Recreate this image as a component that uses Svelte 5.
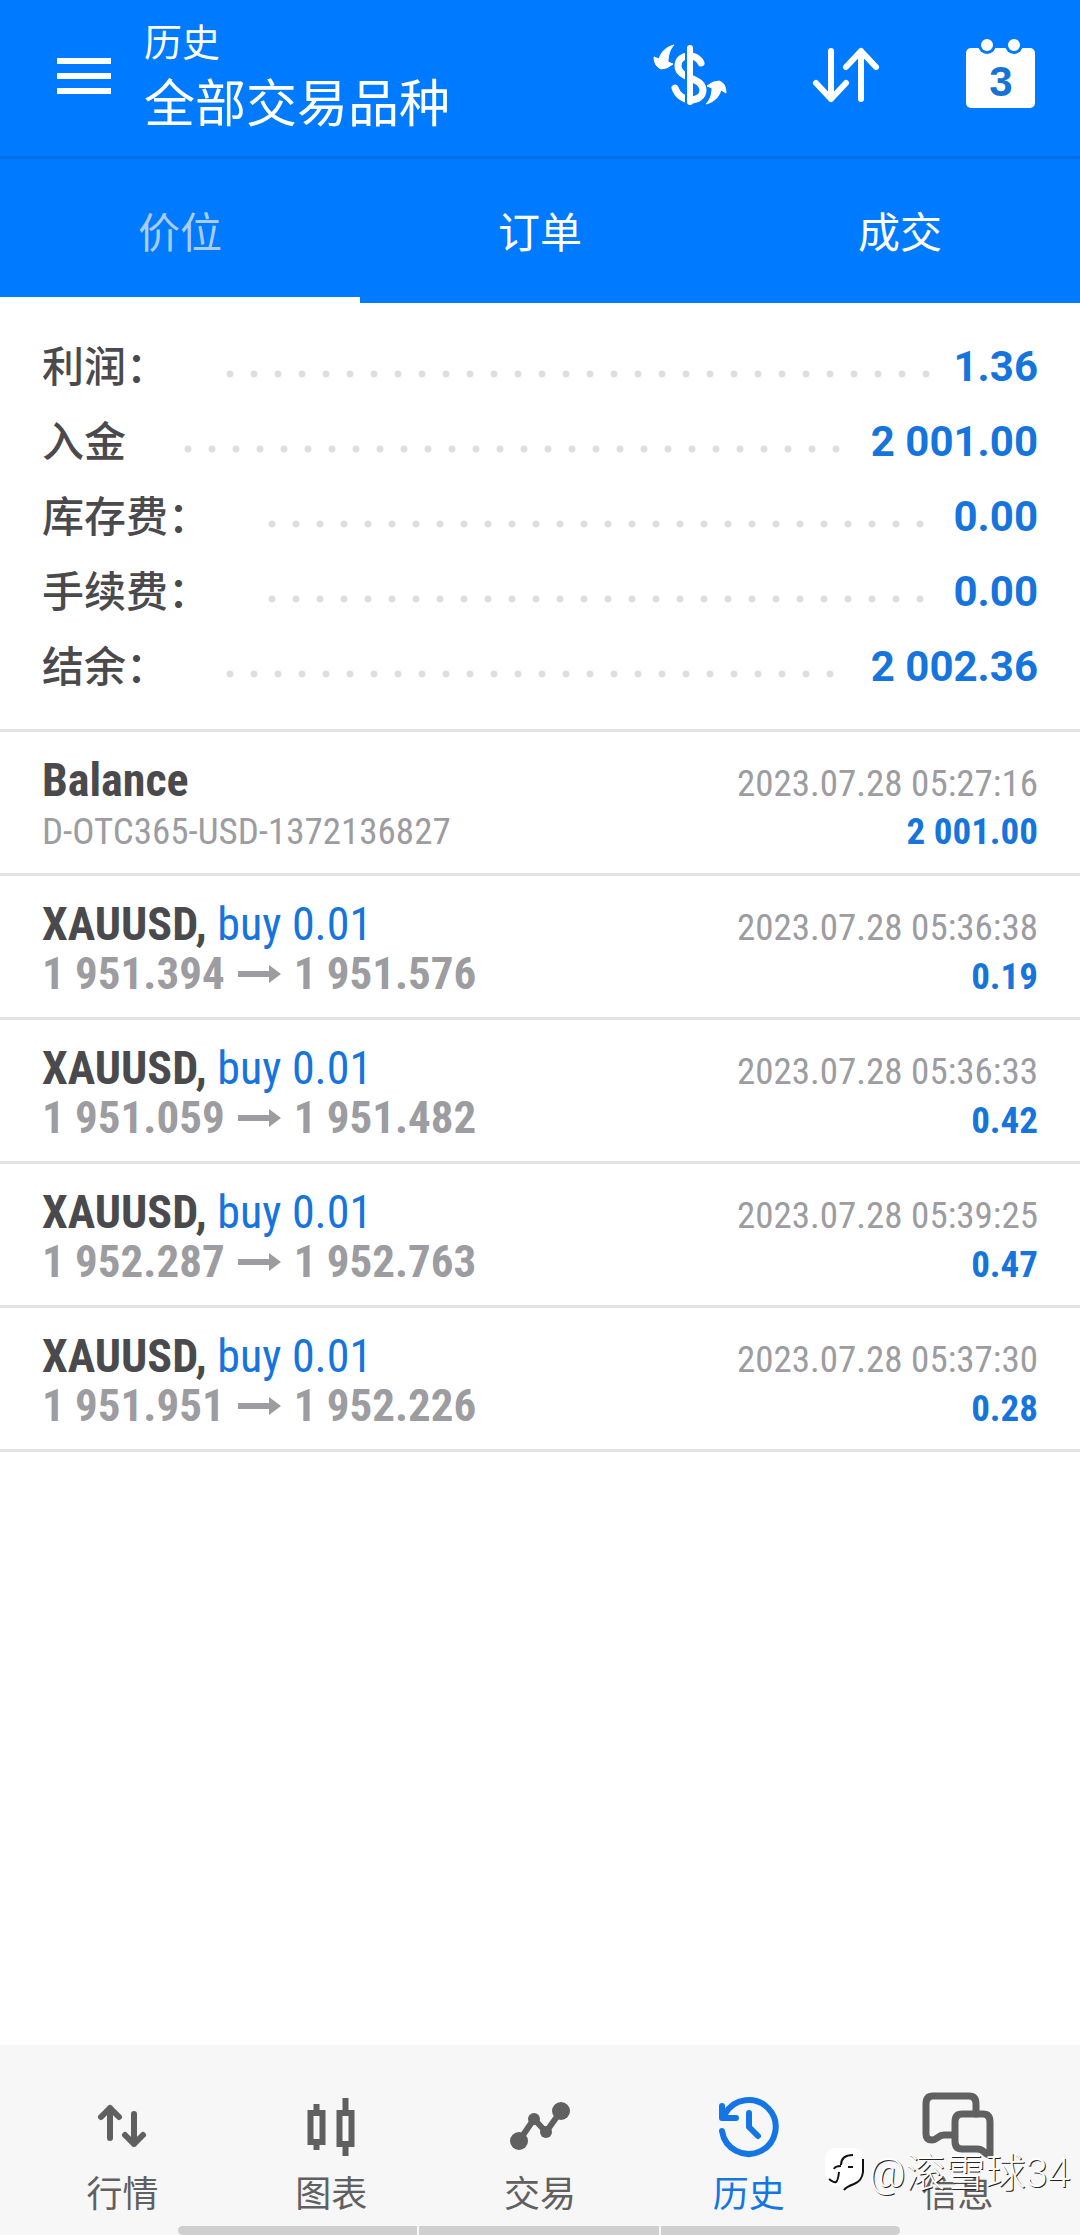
<script lang="ts">
  const navItems = [
    { id: 'quotes', label: '行情' },
    { id: 'chart', label: '图表' },
    { id: 'trade', label: '交易' },
    { id: 'history', label: '历史' },
    { id: 'messages', label: '信息' },
  ];

  const tabs = ['价位', '订单', '成交'];

  const summary = [
    { label: '利润：', value: '1.36' },
    { label: '入金', value: '2 001.00' },
    { label: '库存费：', value: '0.00' },
    { label: '手续费：', value: '0.00' },
    { label: '结余：', value: '2 002.36' },
  ];

  const deals = [
    { from: '1 951.394', to: '1 951.576', time: '2023.07.28 05:36:38', profit: '0.19' },
    { from: '1 951.059', to: '1 951.482', time: '2023.07.28 05:36:33', profit: '0.42' },
    { from: '1 952.287', to: '1 952.763', time: '2023.07.28 05:39:25', profit: '0.47' },
    { from: '1 951.951', to: '1 952.226', time: '2023.07.28 05:37:30', profit: '0.28' },
  ];

  let activeTab = $state(0);
  let activeNav = $state('history');
</script>

<div class="app">
  <header>
    <button class="menu" aria-label="菜单">
      <svg width="54" height="40" viewBox="0 0 54 40"><path d="M0 5h54M0 20h54M0 35h54" stroke="#fff" stroke-width="6" /></svg>
    </button>
    <div class="title">
      <small>历史</small>
      <h1>全部交易品种</h1>
    </div>
    <div class="tools">
      <button aria-label="货币">
        <svg width="74" height="80" viewBox="0 0 74 80" fill="none">
          <path d="M49 27C45 17 26 17 26 30C26 43 51 41 51 54C51 67 28 68 23 52" stroke="#fff" stroke-width="7" stroke-linecap="round" />
          <path d="M35 9v60" stroke="#007aff" stroke-width="4" />
          <path d="M38 12v54" stroke="#fff" stroke-width="6" stroke-linecap="round" />
          <path d="M22 9C14 11 9 16 7 23L2 21Q2 30 9 33Q15 33 21 28L16 26C16 19 18 13 22 9Z" fill="#fff" stroke="#fff" stroke-linejoin="round" />
          <path d="M54 68C62 66 67 61 69 54L74 57Q74 47 67 45Q61 45 55 50L60 52C60 59 58 64 54 68Z" fill="#fff" stroke="#fff" stroke-linejoin="round" />
        </svg>
      </button>
      <button aria-label="排序">
        <svg width="74" height="80" viewBox="0 0 74 80" fill="none" stroke="#fff" stroke-width="6" stroke-linecap="round" stroke-linejoin="round">
          <path d="M23 15v48M8 47l15 16l15-16M53 63V15M38 31l15-16l15 16" />
        </svg>
      </button>
      <button aria-label="日期">
        <svg width="74" height="80" viewBox="0 0 74 80">
          <rect x="2" y="12" width="69" height="60" rx="5" fill="#fff" />
          <circle cx="23" cy="9" r="9" fill="#007aff" />
          <circle cx="50" cy="9" r="9" fill="#007aff" />
          <circle cx="23" cy="9" r="6" fill="#fff" />
          <circle cx="50" cy="9" r="6" fill="#fff" />
          <text x="37" y="60" text-anchor="middle">3</text>
        </svg>
      </button>
    </div>
  </header>

  <div class="tabs" role="tablist">
    {#each tabs as tab, i}
      <button role="tab" aria-selected={activeTab === i} class:active={activeTab === i} onclick={() => (activeTab = i)}>{tab}</button>
    {/each}
  </div>

  <main>
    <dl class="summary">
      {#each summary as row}
        <div class="line">
          <dt>{row.label}</dt>
          <dd><span class="dots"></span>{row.value}</dd>
        </div>
      {/each}
    </dl>

    <ul class="deals">
      <li>
        <div class="row"><span class="symbol"><b>Balance</b></span><time>2023.07.28 05:27:16</time></div>
        <div class="row"><span class="note">D-OTC365-USD-1372136827</span><b class="profit">2 001.00</b></div>
      </li>
      {#each deals as deal}
        <li>
          <div class="row">
            <span class="symbol"><b>XAUUSD,</b> <span class="side">buy 0.01</span></span>
            <time>{deal.time}</time>
          </div>
          <div class="row">
            <span class="prices">
              {deal.from}
              <svg width="43" height="20" viewBox="0 0 43 20" fill="#9c9ca1"><path d="M0 7h31V1l12 9l-12 9v-6H0Z" /></svg>
              {deal.to}
            </span>
            <b class="profit">{deal.profit}</b>
          </div>
        </li>
      {/each}
    </ul>
  </main>

  <nav>
    {#each navItems as item}
      <button class:active={activeNav === item.id} onclick={() => (activeNav = item.id)}>
        <svg width="80" height="64" viewBox="0 0 80 64" fill="none" stroke="currentColor" stroke-width="6" stroke-linecap="round" stroke-linejoin="round">
          {#if item.id === 'quotes'}
            <path d="M28 45V15M19 24l9-9l9 9M52 21v30M43 42l9 9l9-9" />
          {:else if item.id === 'chart'}
            <path d="M25.5 11v7M25.5 51v6M54.5 5v13M54.5 53v10" stroke-linecap="butt" />
            <path d="M19.5 20h12v29h-12ZM48.5 20h12v31h-12Z" stroke-linejoin="miter" />
          {:else if item.id === 'trade'}
            <path d="M19 48L34 26L46 39L61 18" />
            <g fill="currentColor" stroke="none">
              <circle cx="19" cy="48" r="9" />
              <circle cx="34" cy="26" r="6" />
              <circle cx="46" cy="39" r="6" />
              <circle cx="61" cy="18" r="9" />
            </g>
          {:else if item.id === 'history'}
            <path d="M13 38A27 27 0 1 0 16 21M13 13v12h14M40 20v14l9 9" />
          {:else}
            <path d="M35 42H26C20 42 19 47 14 47Q8 47 8 41V11Q8 3 15 3H51q7 0 7 8v10" stroke-width="7" />
            <path d="M44 21H65q7 0 7 8V62C66 62 67 56 59 56H44Q37 56 37 48V29Q37 21 44 21Z" stroke-width="7" />
          {/if}
        </svg>
        <span>{item.label}</span>
      </button>
    {/each}
    <div class="scrollbar"><i></i><i></i><i></i></div>
    <div class="watermark">
      <svg width="40" height="44" viewBox="0 0 40 44" fill="none" stroke="#111">
        <path d="M12 0H27Q38 0 38 12V24Q37 33 26 37L19 42V38H10Q0 36 0 26V12Q0 0 12 0Z" fill="#fff" stroke="none" />
        <path d="M38 11v13q-1 9-9 12t-10 6" stroke-width="2" />
        <path d="M16 17q0-10 12-10M9 21q1-3 7-3M23 19h5M4 31q5 4 7 3t3-10" stroke-width="2" />
      </svg>
      <span>@滚雪球34</span>
    </div>
  </nav>
</div>

<style>
  :global(body) { margin: 0; background: #fff; }
  .app {
    min-height: 100vh;
    display: flex; flex-direction: column;
    font-family: Roboto, "Noto Sans CJK SC", sans-serif;
    color: #4a4a4d;
  }
  button {
    border: none; background: none; padding: 0;
    font: inherit; color: inherit; cursor: pointer;
  }
  svg { display: block; overflow: visible; }

  header {
    display: flex; align-items: center;
    height: 152px; padding: 0 42px 4px 57px;
    background: #007aff; color: #fff;
    border-bottom: 3px solid #006ee6;
  }
  .title { flex: 1; margin-left: 33px; }
  .title small { display: block; font-size: 38px; line-height: 58px; }
  .title h1 { margin: 0; font-size: 51px; line-height: 66px; font-weight: 400; }
  .tools { display: flex; gap: 82px; }
  .tools text { font: bold 42px "Liberation Sans", sans-serif; fill: #1673d6; }

  .tabs { display: grid; grid-template-columns: repeat(3, 1fr); height: 144px; background: #007aff; }
  .tabs button { padding-top: 2px; color: #fff; font-size: 42px; border-bottom: 6px solid #007aff; }
  .tabs .active { color: #a8ccf5; border-color: #fff; }

  main { flex: 1; }
  .summary { margin: 0; padding: 26px 42px 25px; }
  .line { display: flex; align-items: center; height: 75px; font-size: 42px; }
  dt { padding-bottom: 6px; font-weight: 500; }
  dd { flex: 1; display: flex; align-items: center; margin: 0; font-weight: 700; color: #1674dd; }
  .dots {
    flex: 1; height: 8px; margin: 14px 22px 0 58px;
    background: radial-gradient(circle at 4px 4px, #dedede 3px, transparent 4px) 0 0 / 24px 8px repeat-x;
  }

  .deals { list-style: none; margin: 0; padding: 0; border-top: 3px solid #e3e3e5; }
  li {
    box-sizing: border-box; height: 144px; padding: 22px 42px 0;
    border-bottom: 3px solid #e3e3e5;
    font-family: "Roboto Condensed", "Liberation Sans Narrow", Roboto, sans-serif;
  }
  .row { display: flex; justify-content: space-between; align-items: baseline; height: 52px; line-height: 52px; }
  .symbol { font-size: 46px; }
  .side { color: #1674dd; }
  .note, time { font-size: 37px; color: #9c9ca1; }
  .prices { display: flex; align-items: center; gap: 13px; font-size: 45px; line-height: 48px; font-weight: 700; color: #9c9ca1; }
  .profit { font-size: 37px; line-height: 48px; color: #1674dd; }
  .note + .profit { line-height: 52px; }

  nav {
    position: relative;
    display: grid; grid-template-columns: repeat(5, 1fr);
    height: 190px; padding: 0 18px;
    background: #f7f7f7; color: #606060;
  }
  nav button { display: flex; flex-direction: column; align-items: center; padding-top: 48px; font-size: 36px; line-height: 56px; gap: 10px; }
  nav .active { color: #1476e4; }
  .scrollbar { position: absolute; left: 178px; right: 180px; bottom: 0; display: flex; gap: 2px; height: 9px; border-radius: 5px; overflow: hidden; }
  .scrollbar i { flex: 1; background: #cfcfcf; }
  .watermark {
    position: absolute; right: 10px; bottom: 36px;
    display: flex; align-items: center; gap: 4px;
    font-size: 40px; font-weight: 300; color: #fff; text-shadow: 1px 1px 0 #222;
  }
</style>
